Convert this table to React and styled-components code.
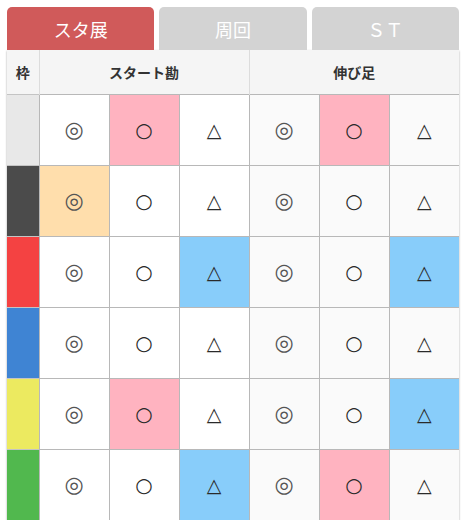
import React from "react";
import styled, { createGlobalStyle } from "styled-components";

const Global = createGlobalStyle`
  html, body { margin: 0; padding: 0; background: #fff; }
  body { font-family: "Noto Sans CJK JP", "Noto Sans", sans-serif; color: #333; }
`;

const Wrap = styled.div`
  padding: 7px 7px 0 7px;
  width: 452px;
`;

const Tabs = styled.div`
  display: flex;
  gap: 5px;
  height: 43px;
`;

const Tab = styled.div`
  flex: 1;
  display: flex;
  align-items: center;
  justify-content: center;
  border-radius: 5px 5px 0 0;
  background: ${(p) => (p.$active ? "#d05a5a" : "#d3d3d3")};
  color: #fff;
  font-size: 18px;
`;

const Table = styled.table`
  border-collapse: collapse;
  table-layout: fixed;
  width: 452px;
  box-shadow: 0 1px 2px rgba(0, 0, 0, 0.35);
`;

const Head = styled.th`
  height: 44px;
  padding: 0;
  background: #f5f5f5;
  font-size: 14px;
  font-weight: bold;
  color: #333;
  border-left: 1px solid #dcdcdc;
  &:first-child { border-left: none; }
`;

const Frame = styled.td`
  padding: 0;
  background: ${(p) => p.$color};
  border-top: 1px solid #c4c4c4;
  border-right: 1px solid #b8b8b8;
`;

const Cell = styled.td`
  height: 70px;
  padding: 0;
  text-align: center;
  border: 1px solid #b8b8b8;
  border-bottom: none;
  border-right: ${(p) => (p.$last ? "none" : "1px solid #b8b8b8")};
  background: ${(p) => p.$bg || (p.$alt ? "#fafafa" : "#fff")};
`;

const Mark = styled.span`
  font-family: "DejaVu Sans", sans-serif;
  font-size: ${(p) => p.$size}px;
  color: ${(p) => p.$color};
  line-height: 1;
`;

const C = {
  p: "#ffb3c0",
  b: "#88cdfa",
  o: "#ffdeac",
};

const MARKS = {
  double: { ch: "◎", size: 22, color: "#555" },
  circle: { ch: "○", size: 20, color: "#2a2a2a" },
  tri: { ch: "△", size: 19, color: "#2a2a2a" },
};

const rows = [
  { frame: "#e8e8e8", cells: ["", "p", "", "", "p", ""] },
  { frame: "#4b4b4b", cells: ["o", "", "", "", "", ""] },
  { frame: "#f44242", cells: ["", "", "b", "", "", "b"] },
  { frame: "#3f84d3", cells: ["", "", "", "", "", ""] },
  { frame: "#ecea60", cells: ["", "p", "", "", "", "b"] },
  { frame: "#51b84e", cells: ["", "", "b", "", "p", ""] },
];

const marks = ["double", "circle", "tri", "double", "circle", "tri"];

export default function App() {
  return (
    <>
      <Global />
      <Wrap>
        <Tabs>
          <Tab $active>スタ展</Tab>
          <Tab>周回</Tab>
          <Tab>ＳＴ</Tab>
        </Tabs>
        <Table>
          <colgroup>
            <col style={{ width: 32 }} />
            <col />
            <col />
            <col />
            <col />
            <col />
            <col />
          </colgroup>
          <thead>
            <tr>
              <Head>枠</Head>
              <Head colSpan={3}>スタート勘</Head>
              <Head colSpan={3}>伸び足</Head>
            </tr>
          </thead>
          <tbody>
            {rows.map((r, i) => (
              <tr key={i}>
                <Frame $color={r.frame} />
                {r.cells.map((c, j) => {
                  const m = MARKS[marks[j]];
                  return (
                    <Cell key={j} $bg={C[c]} $alt={j >= 3} $last={j === 5}>
                      <Mark $size={m.size} $color={m.color}>{m.ch}</Mark>
                    </Cell>
                  );
                })}
              </tr>
            ))}
          </tbody>
        </Table>
      </Wrap>
    </>
  );
}
